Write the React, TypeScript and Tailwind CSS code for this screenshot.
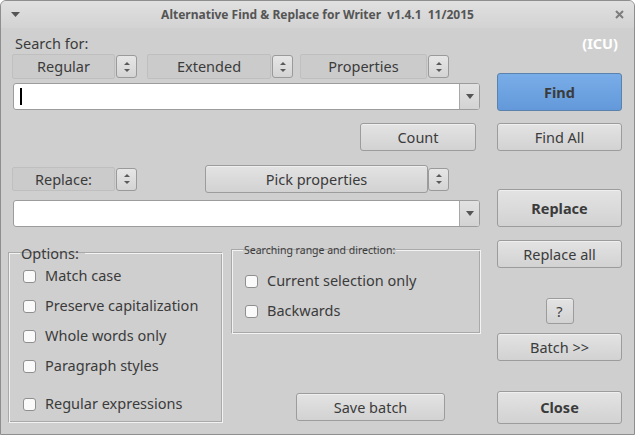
import React from "react";

const btn =
  "flex items-center justify-center border border-[#9c9c9c] rounded-[3px] bg-gradient-to-b from-[#e3e3e3] to-[#d2d2d2] text-[#3b3b3b] text-[14.5px] pt-[1px] shadow-[inset_0_1px_0_#efefef]";

function Spinner({ className = "" }: { className?: string }) {
  return (
    <div
      className={
        "w-[21px] h-[23px] flex flex-col items-center justify-center gap-[4px] border border-[#9a9a9a] rounded-[3px] bg-gradient-to-b from-[#e6e6e6] to-[#d4d4d4] " +
        className
      }
    >
      <svg width="6" height="3" viewBox="0 0 6 3">
        <path d="M0 3 L3 0 L6 3 Z" fill="#5a5a5a" />
      </svg>
      <svg width="6" height="3" viewBox="0 0 6 3">
        <path d="M0 0 L6 0 L3 3 Z" fill="#5a5a5a" />
      </svg>
    </div>
  );
}

function LabelBox({ text, w, h = "h-[25px]" }: { text: string; w: string; h?: string }) {
  return (
    <div
      className={`${w} ${h} flex items-center justify-center pt-[1px] rounded-[2px] border border-[#bfbfbf] bg-[#cbcbcb] text-[14.5px] text-[#3b3b3b]`}
    >
      {text}
    </div>
  );
}

function Combo({ cursor = false }: { cursor?: boolean }) {
  return (
    <div className="ml-[1px] w-[467px] h-[27px] flex border border-[#9c9c9c] rounded-[3px] bg-white overflow-hidden">
      <div className="flex-1 flex items-center pl-[6px]">
        {cursor && <div className="w-[2px] h-[17px] bg-black" />}
      </div>
      <div className="w-[20px] flex items-center justify-center border-l border-[#a8a8a8] bg-gradient-to-b from-[#e2e2e2] to-[#d3d3d3]">
        <svg width="8" height="5" viewBox="0 0 8 5">
          <path d="M0 0 L8 0 L4 5 Z" fill="#555" />
        </svg>
      </div>
    </div>
  );
}

function Check({ label }: { label: string }) {
  return (
    <div className="h-[24px] flex items-center gap-[9px]">
      <div className="w-[13px] h-[13px] rounded-[3px] border border-[#8f8f8f] bg-[#fafafa]" />
      <span className="text-[14.5px] text-[#3b3b3b]">{label}</span>
    </div>
  );
}

export default function App() {
  return (
    <div className="w-[635px] h-[435px] flex flex-col bg-[#cfcfcf] border border-[#8e8e8e] rounded-t-[6px] overflow-hidden font-['Noto_Sans',sans-serif] text-[#3b3b3b]">
      {/* Title bar */}
      <div className="h-[27px] flex items-center bg-gradient-to-b from-[#e0e0e0] to-[#d3d3d3]">
        <div className="w-[40px] pl-[10px] flex items-center">
          <svg width="9" height="5" viewBox="0 0 9 5">
            <path d="M0 0 L9 0 L4.5 5 Z" fill="#555" />
          </svg>
        </div>
        <div className="flex-1 text-center text-[12px] font-bold text-[#555] whitespace-pre">
          Alternative Find &amp; Replace for Writer  v1.4.1  11/2015
        </div>
        <div className="w-[40px] flex justify-end pr-[10px]">
          <svg width="9" height="9" viewBox="0 0 9 9">
            <path d="M1 1 L8 8 M8 1 L1 8" stroke="#7d7d7d" strokeWidth="2" />
          </svg>
        </div>
      </div>

      {/* Body */}
      <div className="flex flex-1">
        {/* Left column */}
        <div className="ml-[11px] w-[470px] flex flex-col">
          <div className="mt-[5px] h-[20px] leading-[20px] text-[14.5px] pl-[3px]">Search for:</div>
          <div className="mt-[1px] flex items-center">
            <LabelBox text="Regular" w="w-[103px]" />
            <Spinner className="ml-[1px]" />
            <LabelBox text="Extended" w="w-[124px] ml-[10px]" />
            <Spinner className="ml-[1px]" />
            <LabelBox text="Properties" w="w-[127px] ml-[7px]" />
            <Spinner className="ml-[1px]" />
          </div>
          <div className="mt-[4px]">
            <Combo cursor />
          </div>
          <div className="mt-[13px] flex">
            <button className={btn + " ml-[348px] w-[116px] h-[28px]"}>Count</button>
          </div>
          <div className="mt-[14px] h-[28px] flex items-center">
            <LabelBox text="Replace:" w="w-[103px]" h="h-[24px]" />
            <Spinner className="ml-[1px]" />
            <button className={btn + " ml-[68px] w-[223px] h-[28px]"}>Pick properties</button>
            <Spinner className="ml-[0px]" />
          </div>
          <div className="mt-[7px]">
            <Combo />
          </div>

          <div className="mt-[16px] -ml-[3px] flex items-start">
            <fieldset className="w-[214px] h-[180px] border border-[#f3f3f3] shadow-[-1px_-1px_0_#a9a9a9,inset_-1px_-1px_0_#a9a9a9] pl-[13px] pt-[1px] m-0 flex flex-col gap-[6px]">
              <legend className="-ml-[3px] pl-[1px] pr-[6px] text-[14.5px] leading-[20px]">Options:</legend>
              <Check label="Match case" />
              <Check label="Preserve capitalization" />
              <Check label="Whole words only" />
              <Check label="Paragraph styles" />
              <div className="mt-[8px]">
                <Check label="Regular expressions" />
              </div>
            </fieldset>
            <div className="ml-[9px] flex flex-col">
              <fieldset className="w-[249px] h-[91px] border border-[#f3f3f3] shadow-[-1px_-1px_0_#a9a9a9,inset_-1px_-1px_0_#a9a9a9] pl-[12px] pt-[12px] m-0 flex flex-col gap-[6px]">
                <legend className="-ml-[2px] px-[1px] text-[10.5px] leading-[14px]">Searching range and direction:</legend>
                <Check label="Current selection only" />
                <Check label="Backwards" />
              </fieldset>
              <button className={btn + " mt-[59px] ml-[64px] w-[149px] h-[28px]"}>Save batch</button>
            </div>
          </div>
        </div>

        {/* Right column */}
        <div className="ml-[15px] w-[125px] flex flex-col">
          <div className="mt-[5px] h-[20px] leading-[20px] text-right pr-[4px] text-[14.5px] font-bold text-white">
            (ICU)
          </div>
          <button className="mt-[20px] h-[38px] flex items-center justify-center pt-[1px] rounded-[3px] border border-[#5a82ad] bg-gradient-to-b from-[#79ade8] to-[#6399da] text-[14.5px] font-bold text-[#3b3b3b]">
            Find
          </button>
          <button className={btn + " mt-[12px] h-[28px]"}>Find All</button>
          <button className={btn + " mt-[38px] h-[38px] font-bold"}>Replace</button>
          <button className={btn + " mt-[13px] h-[28px]"}>Replace all</button>
          <button className={btn + " mt-[30px] h-[26px] w-[28px] self-center"}>?</button>
          <button className={btn + " mt-[9px] h-[28px]"}>Batch &gt;&gt;</button>
          <button className={btn + " mt-[30px] h-[33px] font-bold"}>Close</button>
        </div>
      </div>
    </div>
  );
}
